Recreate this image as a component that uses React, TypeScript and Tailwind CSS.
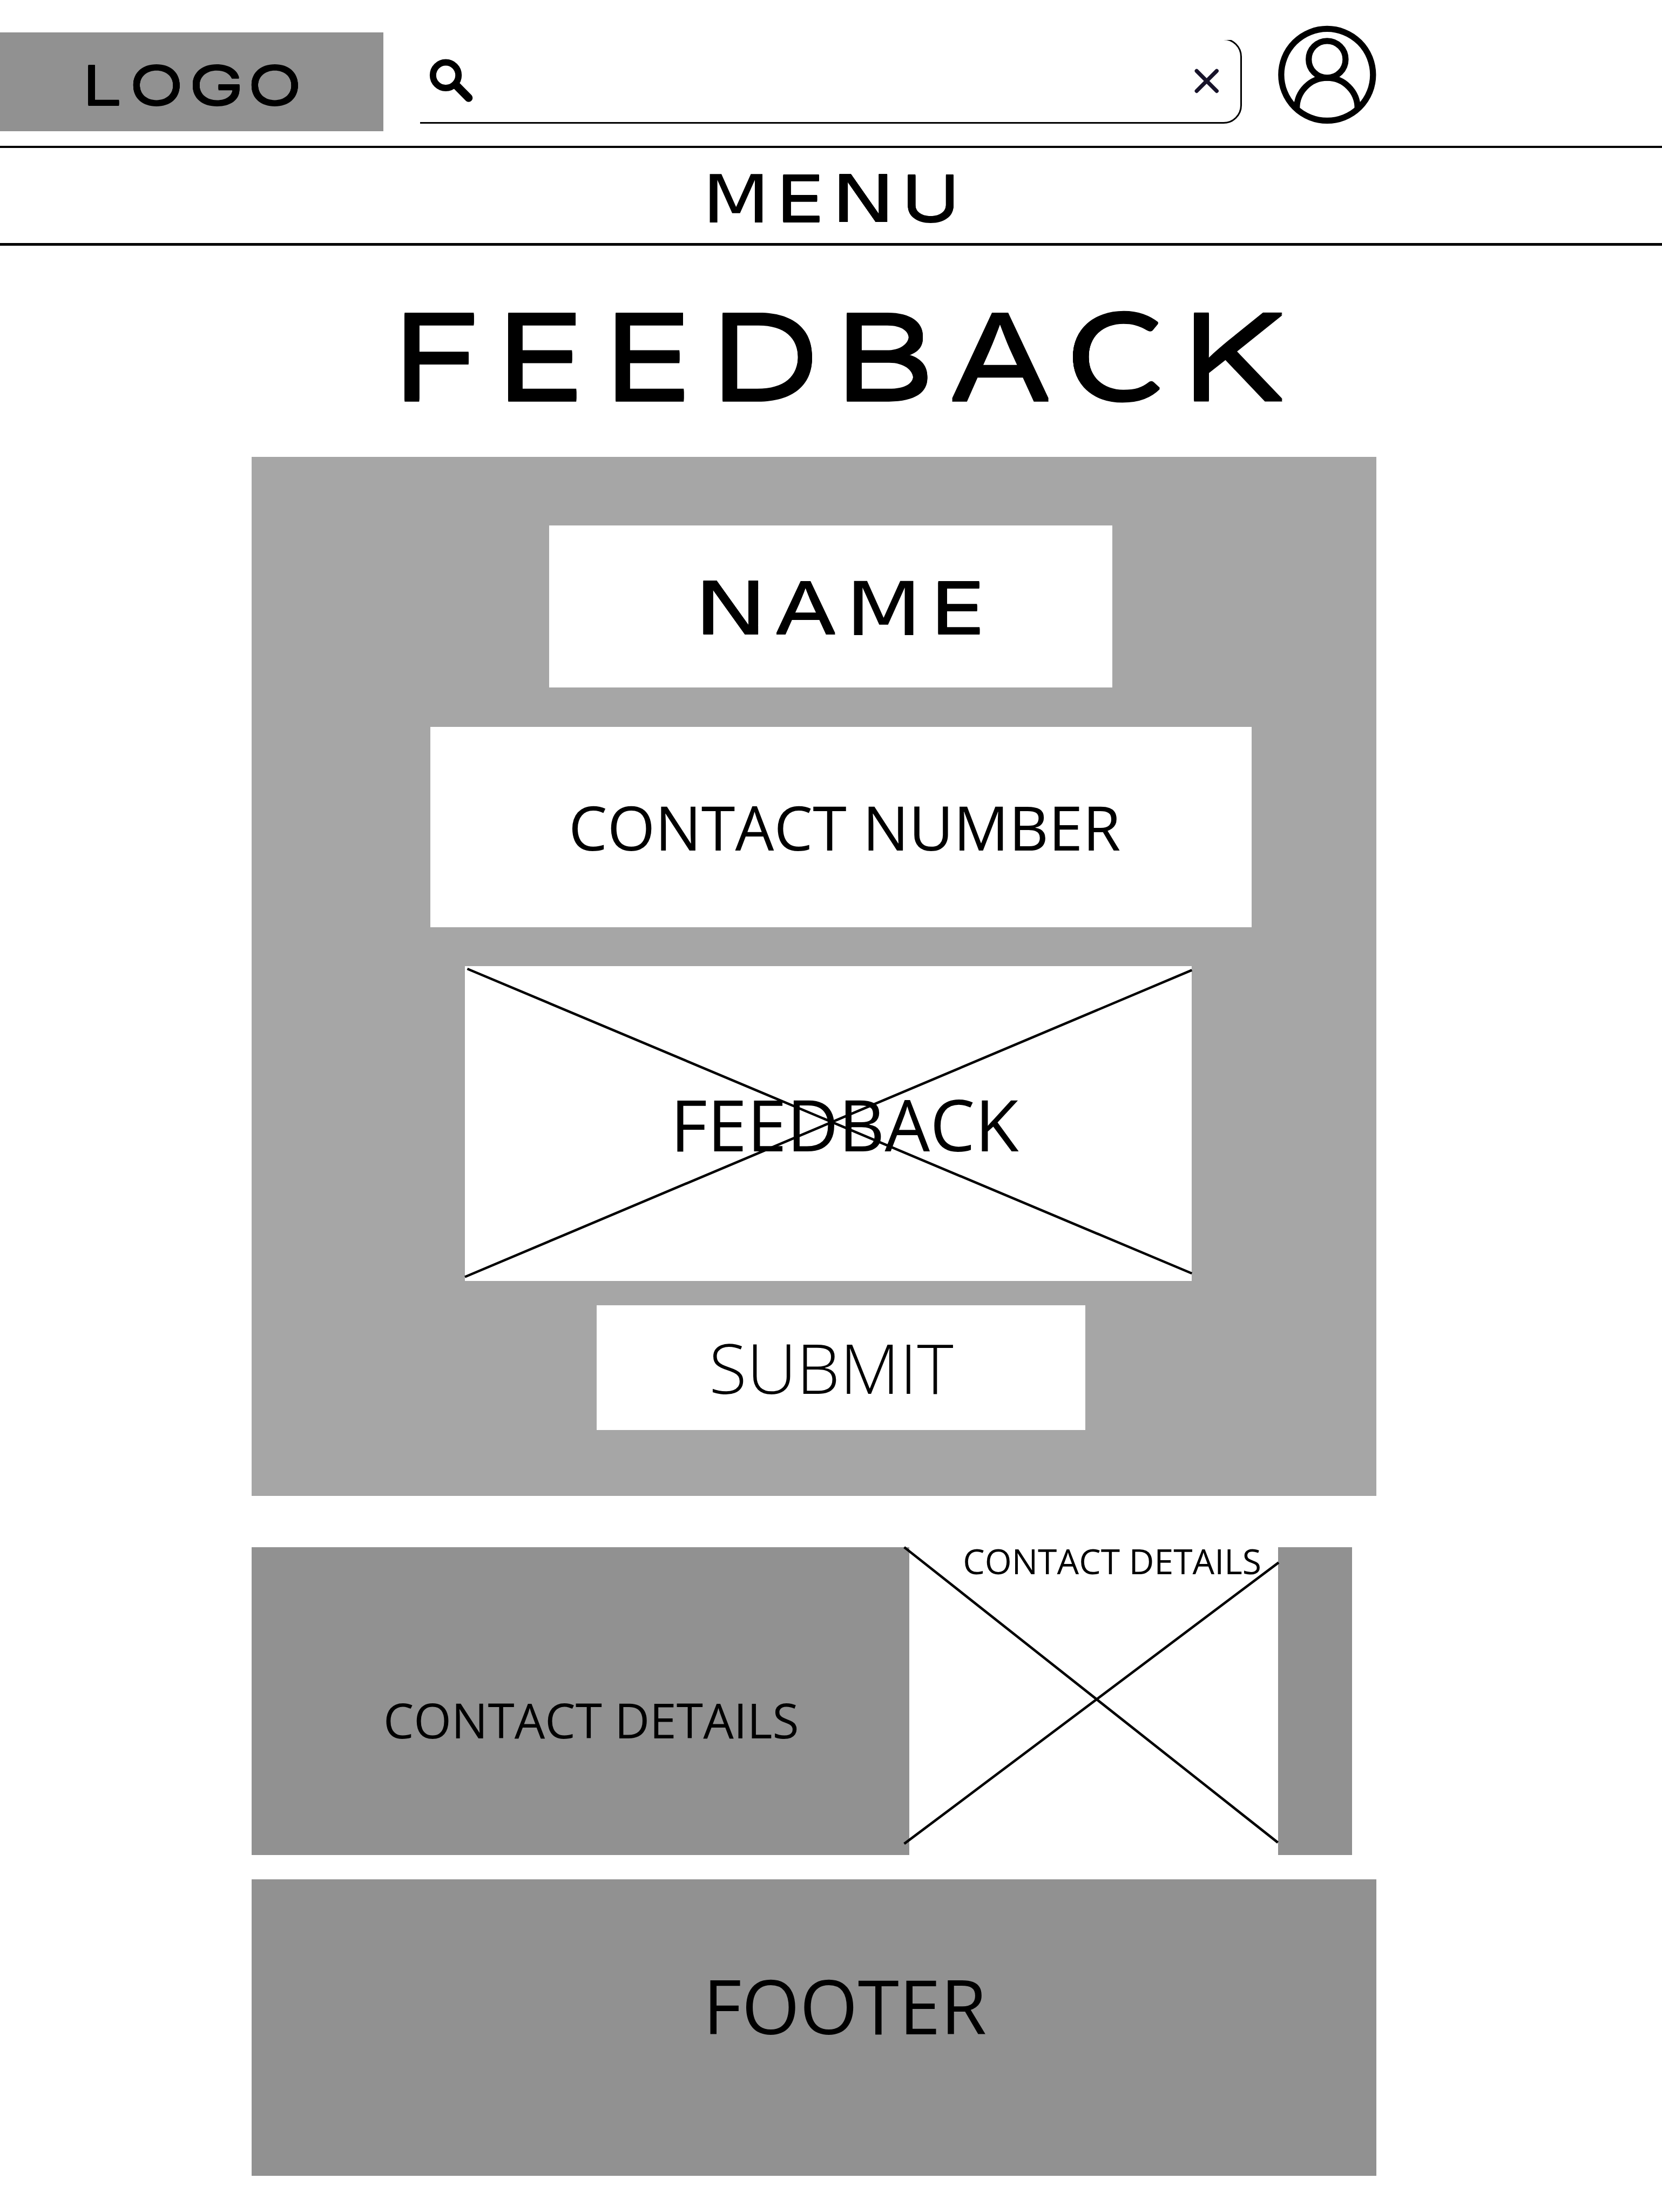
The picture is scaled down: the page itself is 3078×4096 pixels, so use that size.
type Glyph = { ch: string; gap?: number; w: number };
type Face = { family: string; weight: number; grow: number; pad: number };

const INTER: Face = { family: "Inter", weight: 400, grow: 0.036, pad: 0.009 };
const FACES: Record<string, Face> = {
  A: { family: "Inter", weight: 400, grow: 0.036, pad: 0.009 },
  K: { family: "Inter", weight: 400, grow: 0.03, pad: 0.009 },
  N: { family: "DejaVu Sans", weight: 400, grow: 0.01, pad: 0 },
  M: { family: "DejaVu Sans", weight: 400, grow: 0, pad: 0 },
  C: { family: "Lato", weight: 500, grow: 0.018, pad: 0.009 },
};

const ctx = document.createElement("canvas").getContext("2d")!;

function fit(ch: string, width: number, cap: number) {
  const face = FACES[ch] ?? INTER;
  const grow = face.grow * cap;
  const pad = face.pad * cap;
  ctx.font = `${face.weight} 1000px "${face.family}"`;
  const size = ((cap - grow) / ctx.measureText("E").actualBoundingBoxAscent) * 1000;
  const m = ctx.measureText(ch);
  const left = (-m.actualBoundingBoxLeft * size) / 1000;
  const right = (m.actualBoundingBoxRight * size) / 1000;
  const k = (width + 2 * pad) / (right - left);
  const baseline = size * (0.5 + (m.fontBoundingBoxAscent - m.fontBoundingBoxDescent) / 2000);
  const shadow = [1, 2, 3, 4].map((n) => `0 ${(grow * n) / 4}px 0 #000`).join(", ");
  return {
    fontFamily: face.family,
    fontWeight: face.weight,
    fontSize: size,
    textShadow: grow ? shadow : "none",
    transform: `translate(${-left * k - pad}px, ${cap - grow - baseline}px) scaleX(${k})`,
  };
}

/** Extended display lettering: every capital is stretched to its own width. */
function WideWord({ glyphs, cap }: { glyphs: Glyph[]; cap: number }) {
  return (
    <span className="flex text-black">
      {glyphs.map((g, i) => (
        <span key={i} className="block shrink-0" style={{ width: g.w, height: cap, marginLeft: g.gap ?? 0 }}>
          <span className="block w-max origin-top-left leading-none" style={fit(g.ch, g.w, cap)}>
            {g.ch}
          </span>
        </span>
      ))}
    </span>
  );
}

const LOGO: Glyph[] = [
  { ch: "L", w: 58.4 },
  { ch: "O", gap: 24.2, w: 87.9 },
  { ch: "G", gap: 22.4, w: 87.3 },
  { ch: "O", gap: 21.8, w: 88 },
];
const MENU: Glyph[] = [
  { ch: "M", w: 98.2 },
  { ch: "E", gap: 37.9, w: 68.3 },
  { ch: "N", gap: 36.1, w: 90.1 },
  { ch: "U", gap: 37.2, w: 84 },
];
const TITLE: Glyph[] = [
  { ch: "F", w: 128.9 },
  { ch: "E", gap: 63.9, w: 128.9 },
  { ch: "E", gap: 69.5, w: 128.9 },
  { ch: "D", gap: 69.5, w: 168.2 },
  { ch: "B", gap: 61.7, w: 152.3 },
  { ch: "A", gap: 42.6, w: 180.5 },
  { ch: "C", gap: 42.6, w: 163.6 },
  { ch: "K", gap: 61.7, w: 167 },
];
const NAME: Glyph[] = [
  { ch: "N", w: 103.2 },
  { ch: "A", gap: 32.5, w: 109.9 },
  { ch: "M", gap: 34, w: 110.6 },
  { ch: "E", gap: 45.7, w: 78.2 },
];

function SearchBar() {
  return (
    <div className="relative ml-[68px] mt-[74px] flex h-[154.5px] w-[1521.5px] items-start justify-between overflow-hidden pl-[16.6px] pr-[42.5px]">
      <div className="absolute -left-[60px] -top-[3px] bottom-0 right-0 rounded-[34px] border-[3.5px] border-black" />
      <svg className="mt-[35px] h-[80.5px] w-[81.4px]" viewBox="859 118 88 87" fill="none" stroke="#000">
        <circle cx="892" cy="150.7" r="25.6" strokeWidth="12.9" />
        <path d="M914 172L937.8 196" strokeWidth="16.2" strokeLinecap="round" />
      </svg>
      <svg className="mt-[52.7px] h-[46.2px] w-[45.3px]" viewBox="2391 137 49 50" fill="none" stroke="#17132a">
        <path d="M2395.5 141.7L2435.7 182M2435.7 141.7L2395.5 182" strokeWidth="7.8" strokeLinecap="round" />
      </svg>
    </div>
  );
}

function UserIcon() {
  return (
    <svg
      className="ml-[67.6px] mt-[47.4px] h-[183.2px] w-[182.2px]"
      viewBox="2559 51 197 198"
      fill="none"
      stroke="#000"
      strokeWidth="12.2"
    >
      <circle cx="2657.2" cy="149.8" r="91.9" />
      <circle cx="2657.2" cy="119" r="36.9" />
      <path d="M2596.4 219V217a60.9 61 0 0 1 121.8 0V219" />
    </svg>
  );
}

export default function App() {
  return (
    <div className="flex h-[4096px] w-[3078px] flex-col overflow-hidden bg-white font-['Open_Sans',sans-serif] text-black">
      <header className="flex h-[270px] shrink-0 items-start">
        <div className="mt-[60px] h-[183px] w-[710.4px] bg-[#919191] pl-[163.4px] pt-[59.6px]">
          <WideWord glyphs={LOGO} cap={76.5} />
        </div>
        <SearchBar />
        <UserIcon />
      </header>

      <nav className="h-[185px] shrink-0 border-b-[5px] border-t-[4px] border-black pl-[1313.5px] pt-[48.8px]">
        <WideWord glyphs={MENU} cap={89.7} />
      </nav>

      <h1 className="h-[391px] shrink-0 pl-[747.6px] pt-[122.6px]">
        <WideWord glyphs={TITLE} cap={166.3} />
      </h1>

      <main className="ml-[466px] flex w-[2083px] shrink-0 flex-col">
        <section className="flex h-[1924px] flex-col bg-[#a6a6a6] pt-[127px]">
          <div className="ml-[551px] h-[300px] w-[1043px] bg-white pl-[284.6px] pt-[101.9px]">
            <WideWord glyphs={NAME} cap={100.8} />
          </div>
          <div className="ml-[331px] mt-[73px] h-[371px] w-[1521px] bg-white pl-[256px] pt-[128.2px] text-[113.8px] leading-none whitespace-nowrap">
            CONTACT NUMBER
          </div>
          <div className="relative ml-[395px] mt-[72px] h-[583px] w-[1346px] bg-white pl-[380.5px] pt-[225.6px] text-[132.4px] leading-none whitespace-nowrap">
            FEEDBACK
            <svg className="absolute inset-0 h-full w-full overflow-visible" viewBox="0 1 1346 583" stroke="#000" strokeWidth="4.6">
              <path d="M4.5 6L1346.3 570M0 576.5L1346.3 8.4" />
            </svg>
          </div>
          <div className="ml-[639px] mt-[45px] h-[231px] w-[905px] bg-white pl-[208px] pt-[50.5px] text-[128.2px] font-light leading-none whitespace-nowrap">
            SUBMIT
          </div>
        </section>

        <section className="mt-[95px] flex h-[570px]">
          <div className="w-[1218px] bg-[#919191] pl-[244px] pt-[274.5px] text-[89.5px] leading-none whitespace-nowrap">
            CONTACT DETAILS
          </div>
          <div className="relative w-[683px] pl-[99.2px] text-[64.3px] leading-none whitespace-nowrap">
            <p className="-mt-[6.8px]">CONTACT DETAILS</p>
            <svg className="absolute inset-0 h-full w-full overflow-visible" viewBox="0 0 683 570" stroke="#000" strokeWidth="4.6">
              <path d="M-9.4 0L682.6 546.9M-9.4 549.2L684 28.4" />
            </svg>
          </div>
          <div className="w-[137px] bg-[#919191]" />
        </section>

        <footer className="mt-[45px] h-[549px] bg-[#919191] pl-[836px] pt-[165px] text-[138.4px] leading-none whitespace-nowrap">
          FOOTER
        </footer>
      </main>
    </div>
  );
}
